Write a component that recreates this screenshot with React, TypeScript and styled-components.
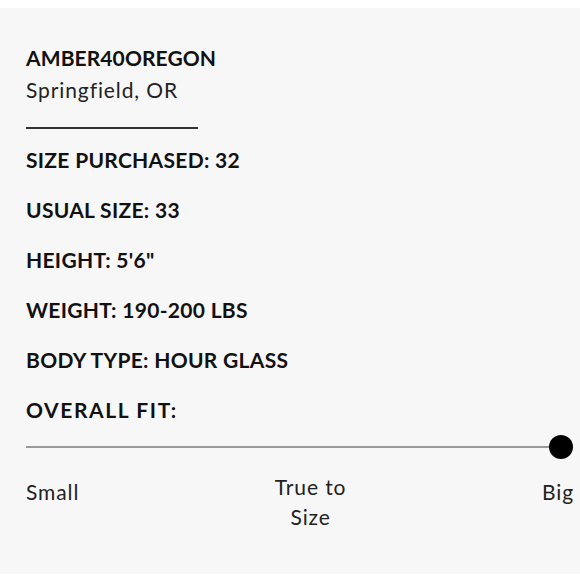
import React from "react";
import styled, { createGlobalStyle } from "styled-components";

const Global = createGlobalStyle`
  html, body { margin: 0; padding: 0; background: #ffffff; }
  body { font-family: Lato, "Open Sans", sans-serif; color: #111; }
`;

const Panel = styled.section`
  margin-top: 8px;
  height: 566px;
  box-sizing: border-box;
  background: #f7f7f7;
  padding: 36px 6px 0 26px;
`;

const Name = styled.div`
  font-size: 21px;
  font-weight: 700;
  letter-spacing: 0.1px;
  line-height: 28px;
  color: #111;
`;

const Location = styled.div`
  margin-top: 3px;
  font-size: 21px;
  font-weight: 400;
  line-height: 30px;
  letter-spacing: 0.9px;
  color: #222;
`;

const Rule = styled.hr`
  width: 172px;
  height: 2px;
  border: 0;
  background: #333;
  margin: 22px 0 0 0;
`;

const Stats = styled.div`
  display: flex;
  flex-direction: column;
  gap: 22px;
  margin-top: 17px;
`;

const Stat = styled.div<{ $wide?: boolean }>`
  font-size: 21px;
  font-weight: 700;
  line-height: 28px;
  letter-spacing: ${(p) => (p.$wide ? "1.6px" : "0.3px")};
  text-transform: uppercase;
  color: #111;
`;

const Track = styled.div`
  position: relative;
  margin: 11px 13px 0 0;
  height: 24px;
  display: flex;
  align-items: center;
`;

const Line = styled.div`
  flex: 1;
  height: 2px;
  background: #9a9a9a;
`;

const Knob = styled.div`
  position: absolute;
  top: 0;
  width: 24px;
  height: 24px;
  border-radius: 50%;
  background: #000;
  transform: translateX(-50%);
`;

const Scale = styled.div`
  display: flex;
  justify-content: space-between;
  align-items: flex-start;
  margin-top: 13px;
  font-size: 21px;
  line-height: 30px;
  letter-spacing: 0.9px;
  color: #222;
`;

const Tick = styled.div<{ $drop?: number }>`
  text-align: center;
  padding-top: ${(p) => p.$drop ?? 0}px;
`;

const stats = [
  "Size Purchased: 32",
  "Usual Size: 33",
  "Height: 5'6\"",
  "Weight: 190-200 lbs",
  "Body Type: Hour Glass",
];

export default function App() {
  const fit = 1;
  return (
    <>
      <Global />
      <Panel>
        <Name>AMBER40OREGON</Name>
        <Location>Springfield, OR</Location>
        <Rule />
        <Stats>
          {stats.map((s) => (
            <Stat key={s}>{s}</Stat>
          ))}
          <Stat $wide>Overall Fit:</Stat>
        </Stats>
        <Track>
          <Line />
          <Knob style={{ left: `${fit * 100}%` }} />
        </Track>
        <Scale>
          <Tick $drop={5}>Small</Tick>
          <Tick>True to<br />Size</Tick>
          <Tick $drop={5}>Big</Tick>
        </Scale>
      </Panel>
    </>
  );
}
